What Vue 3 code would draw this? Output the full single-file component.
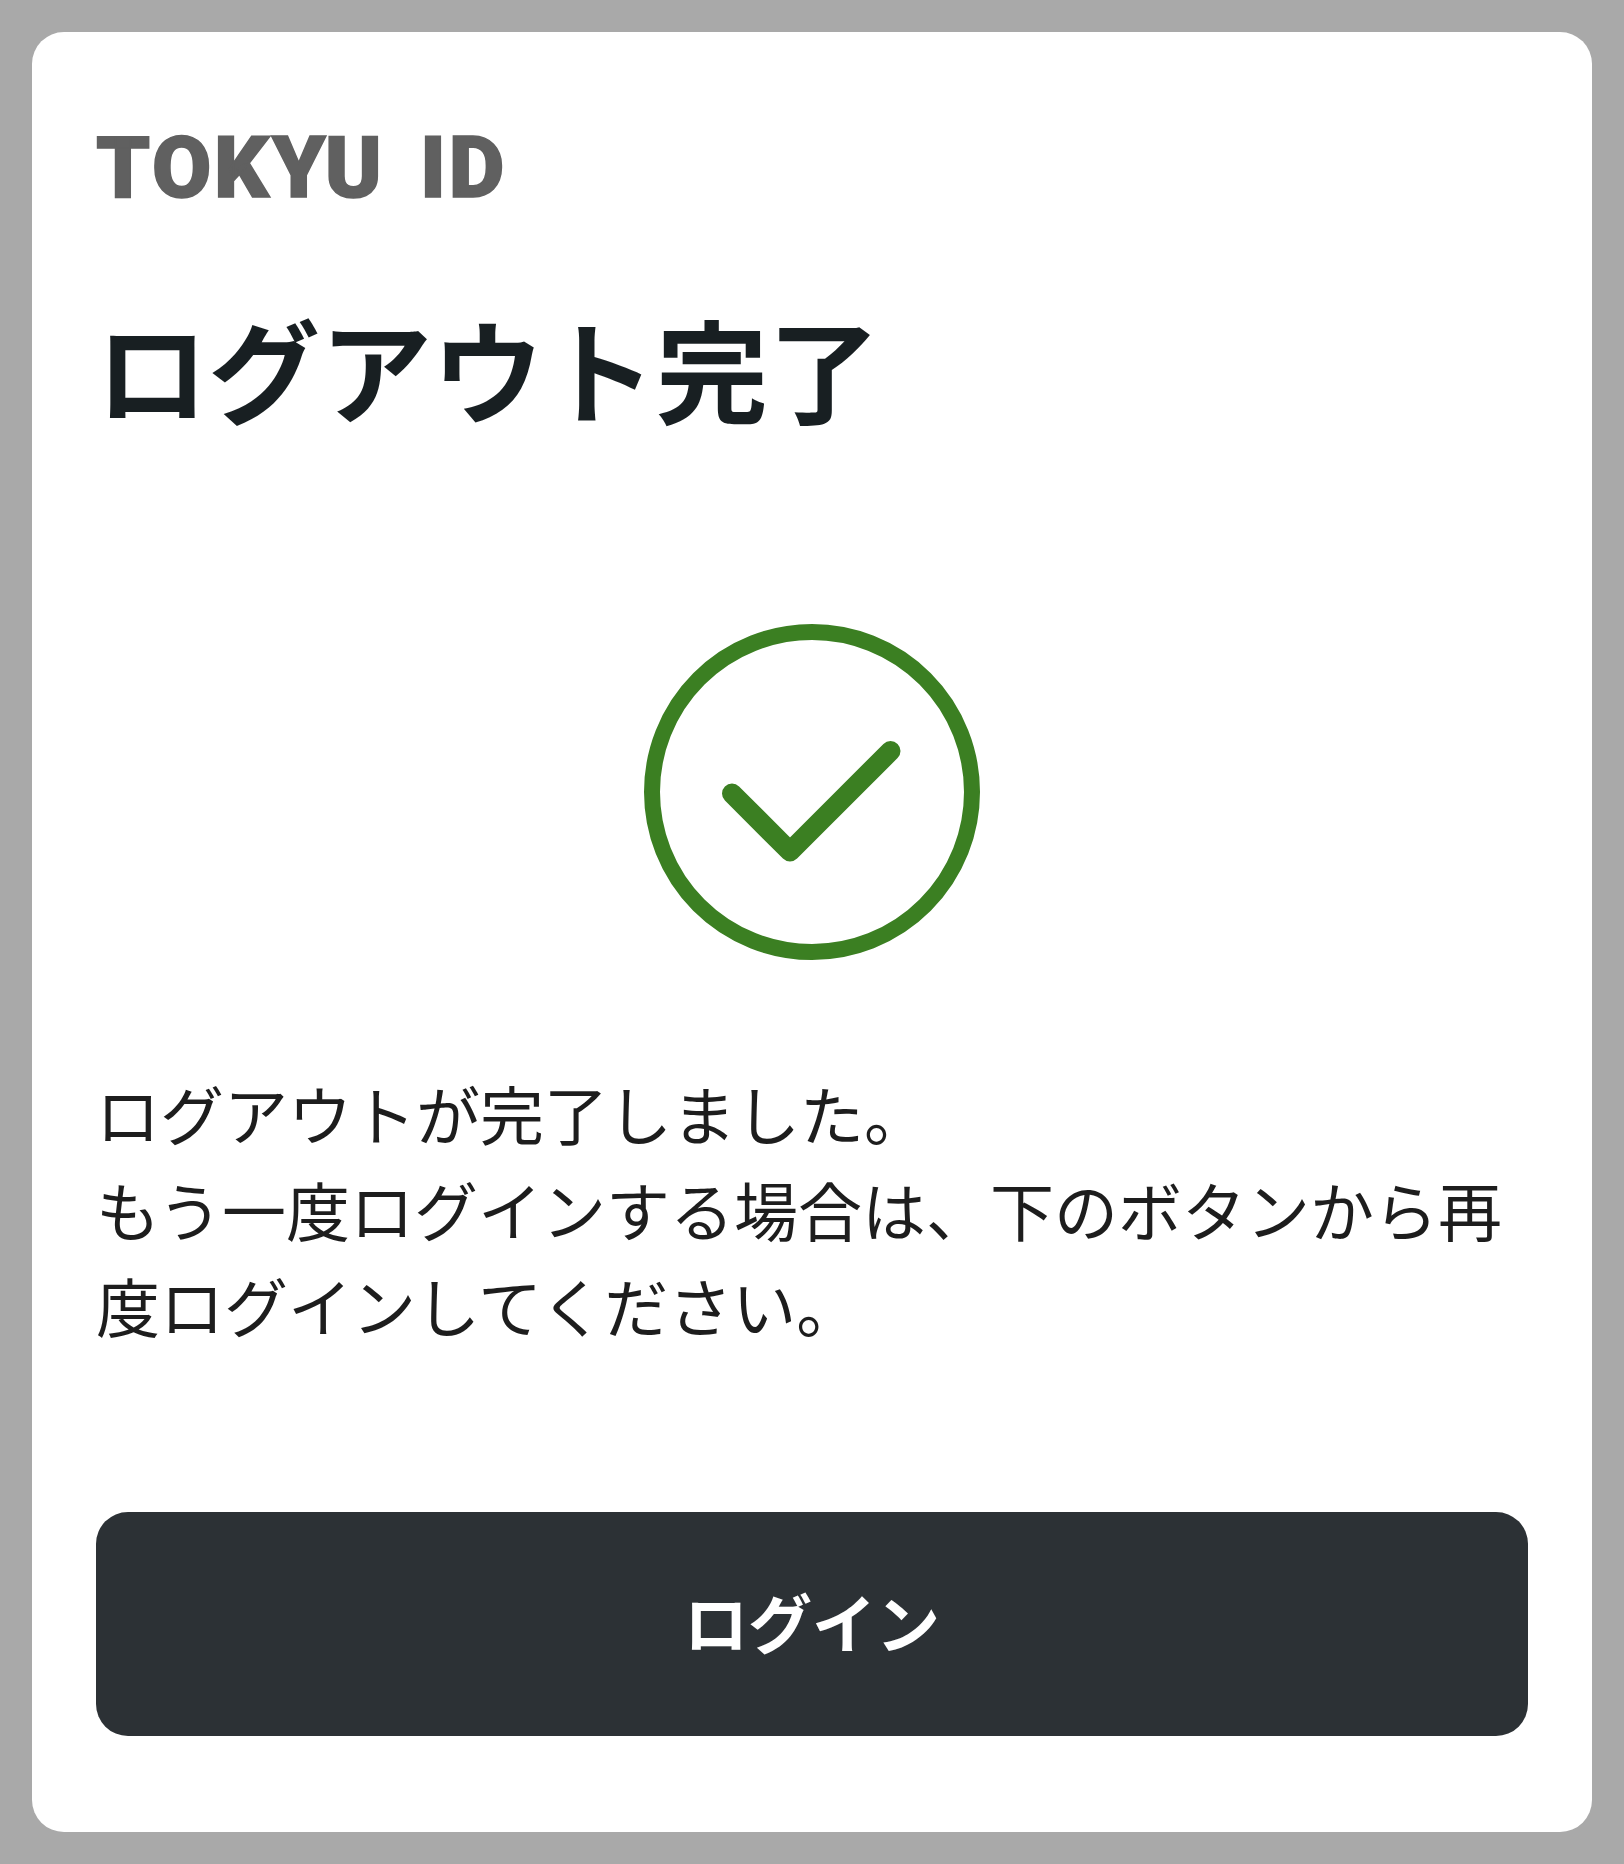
<template>
  <div class="page">
    <main class="card">
      <div class="logo">TOKYU&nbsp;&nbsp;ID</div>
      <h1 class="title">ログアウト完了</h1>
      <div class="icon-wrap">
        <svg class="check-icon" viewBox="0 0 336 336" width="336" height="336" aria-hidden="true">
          <circle cx="168" cy="168" r="160" fill="none" stroke="#3b7f22" stroke-width="16" />
          <path
              d="M88 169.5 L146 227.5 L246.5 127"
              fill="none"
              stroke="#3b7f22"
              stroke-width="20"
              stroke-linecap="round"
              stroke-linejoin="round"
          />
        </svg>
      </div>
      <p class="message">
        ログアウトが完了しました。<br />もう一度ログインする場合は、下のボタンから再度ログインしてください。
      </p>
      <button class="login-button" type="button">ログイン</button>
    </main>
  </div>
</template>

<script setup>
</script>

<style>
html,
body {
  margin: 0;
  background: #a9a9a9;
}
</style>

<style scoped>
.page {
  box-sizing: border-box;
  width: 1624px;
  height: 1864px;
  padding: 32px;
  background: #a9a9a9;
  font-family: "Noto Sans CJK JP", "Liberation Sans", sans-serif;
}

.card {
  box-sizing: border-box;
  display: flex;
  flex-direction: column;
  height: 1800px;
  padding: 96px 64px;
  background: #fff;
  border-radius: 32px;
}

.logo {
  font-family: Roboto, "Liberation Sans", sans-serif;
  font-size: 86px;
  font-weight: 900;
  line-height: 80px;
  letter-spacing: 2.8px;
  word-spacing: -6.5px;
  color: #606060;
  -webkit-text-stroke: 1.5px #606060;
  white-space: nowrap;
}

.title {
  margin: 75px 0 0;
  font-size: 112px;
  font-weight: 700;
  line-height: 168px;
  color: #181f22;
}

.icon-wrap {
  display: flex;
  justify-content: center;
  margin-top: 173px;
}

.check-icon {
  display: block;
}

.message {
  margin: 104px 0 0;
  font-size: 64px;
  line-height: 96px;
  color: #1d1d1d;
}

.login-button {
  display: block;
  width: 100%;
  height: 224px;
  margin-top: 160px;
  padding: 0 0 8px;
  border: none;
  border-radius: 32px;
  background: #2c3135;
  color: #fff;
  font-family: inherit;
  font-size: 64px;
  font-weight: 700;
}
</style>
